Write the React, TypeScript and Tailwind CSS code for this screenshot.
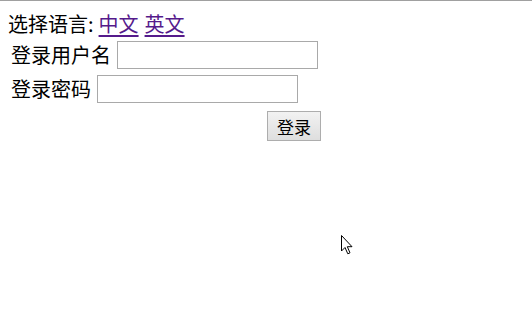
export default function App() {
  return (
    <div className="relative h-[327px] w-[532px] overflow-hidden border-t border-[#a0a0a0] bg-white font-['Noto_Sans_CJK_SC','Noto_Sans',sans-serif] text-black">
      <div className="px-2 pt-[11px]">
        <div className="flex h-[24px] items-center text-[20px] leading-[24px]">
          <span>选择语言:</span>
          <a href="#" className="ml-[5px] text-[#551a8b] underline underline-offset-[3px]">
            中文
          </a>
          <a href="#" className="ml-[6px] text-[#551a8b] underline underline-offset-[3px]">
            英文
          </a>
        </div>
        <div className="mt-[5px] flex flex-col gap-[6px] pl-[3px] text-[20px]">
          <label className="flex h-[28px] items-center gap-[6px]">
            <span className="w-[100px] leading-[28px]">登录用户名</span>
            <input type="text" className="h-[28px] w-[201px] border border-[#a9a9a9] bg-white px-1 text-[14px] outline-none" />
          </label>
          <label className="flex h-[28px] items-center gap-[6px]">
            <span className="w-[80px] leading-[28px]">登录密码</span>
            <input type="password" className="h-[28px] w-[201px] border border-[#a9a9a9] bg-white px-1 text-[14px] outline-none" />
          </label>
        </div>
        <div className="mt-[8px] flex w-[313px] justify-end">
          <button className="h-[30px] w-[54px] border border-[#adadad] bg-gradient-to-b from-[#f2f2f2] to-[#dedede] text-[17px] leading-none">
            登录
          </button>
        </div>
      </div>
      <svg className="absolute left-[341px] top-[234px]" width="13" height="20" viewBox="0 0 13 20">
        <path d="M0.5 0.5 L0.5 16 L4 12.5 L6.8 18.8 L9 17.8 L6.3 11.7 L11 11.7 Z" fill="white" stroke="black" strokeWidth="1" strokeLinejoin="miter" />
      </svg>
    </div>
  );
}
